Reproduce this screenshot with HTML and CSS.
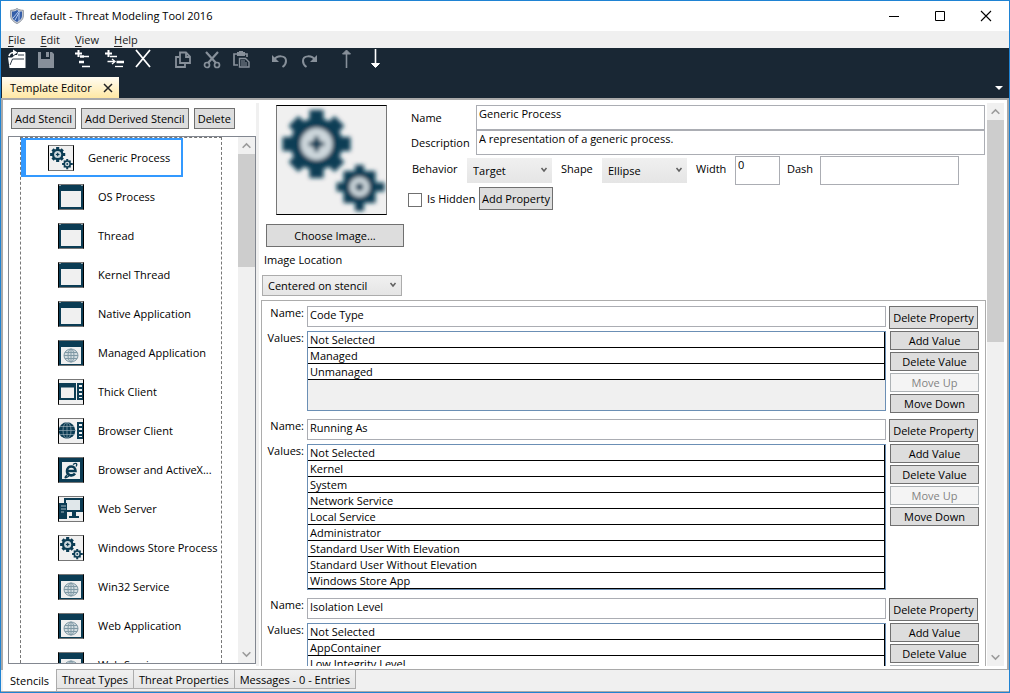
FILE: index.html
```html
<!DOCTYPE html>
<html lang="en">
<head>
<meta charset="utf-8">
<title>default - Threat Modeling Tool 2016</title>
<link rel="stylesheet" href="styles.css">
</head>
<body>
<svg class="sprite" aria-hidden="true">
  <defs>
    <filter id="soft" x="-5%" y="-5%" width="110%" height="110%"><feGaussianBlur stdDeviation="2.2"/></filter>
    <symbol id="gears" viewBox="0 0 108 108">
      <g fill="#0b3c54">
        <circle cx="39" cy="38" r="26"/>
        <g stroke="#0b3c54" stroke-width="14">
          <path d="M39 4v68M5 38h68M16 15l46 46M62 15l-46 46"/>
        </g>
        <circle cx="39" cy="38" r="16" fill="#cdd7dc"/>
        <path d="M37 30h4v6h6v4h-6v6h-4v-6h-6v-4h6z"/>
        <circle cx="39" cy="38" r="5"/>
        <path d="M66 65h32v32h-32z"/>
        <path d="M82 59v46M59 81h48" stroke="#0b3c54" stroke-width="9"/>
        <circle cx="82" cy="81" r="10" fill="#cdd7dc"/>
        <circle cx="82" cy="81" r="4"/>
      </g>
    </symbol>
    <symbol id="window" viewBox="0 0 24 24">
      <path d="M0 0h24v24H0z" fill="#0b3c54"/>
      <path d="M0 0h2v1H0zM22 0h2v1h-2z" fill="#8aa0ab"/>
      <path d="M2 6h20v16H2z" fill="#f0f0f0"/>
    </symbol>
    <symbol id="webwindow" viewBox="0 0 24 24">
      <path d="M0 0h24v24H0z" fill="#0b3c54"/>
      <path d="M2 6h20v17H2z" fill="#f0f0f0"/>
      <ellipse cx="12" cy="14.500" rx="7" ry="6.500" fill="#d3dce0"/>
      <g fill="none" stroke="#8099a5">
        <ellipse cx="12" cy="14.500" rx="7" ry="6.500"/><ellipse cx="12" cy="14.500" rx="3" ry="6.500"/>
        <path d="M12 8v13M5 14.500h14M6 11.500h12M6 17.500h12"/>
      </g>
    </symbol>
    <symbol id="thick" viewBox="0 0 24 24">
      <path d="M0 3h17v17H0z" fill="#0b3c54"/><path d="M2 7.500h13V18H2z" fill="#f0f0f0"/>
      <path d="M18 3h6v17h-6z" fill="#0b3c54"/><path d="M20 5h3v2h-3zM20 9h3v2h-3zM20 13h3v2h-3zM20 17h3v1h-3z" fill="#f0f0f0"/>
    </symbol>
    <symbol id="browser" viewBox="0 0 24 24">
      <circle cx="8" cy="11.500" r="8.300" fill="#0b3c54"/>
      <g fill="none" stroke="#a9bac3" stroke-width=".6"><ellipse cx="8" cy="11.500" rx="4" ry="8"/><path d="M8 3v17M0 11.500h16M1 7.500h14M1 15.500h14"/></g>
      <path d="M18 3h6v17h-6z" fill="#0b3c54"/><path d="M20 5h3v2h-3zM20 9h3v2h-3zM20 13h3v2h-3zM20 17h3v1h-3z" fill="#f0f0f0"/>
    </symbol>
    <symbol id="activex" viewBox="0 0 24 24">
      <path d="M0 0h24v24H0z" fill="#0b3c54"/><path d="M3 4h18v17H3z" fill="#f0f0f0"/>
      <path d="M8 13h8.500c0-6-8.500-6-8.500 0 0 5 6 5.500 8 2.500" fill="none" stroke="#0b3c54" stroke-width="2.600"/>
      <path d="M8 17c-4 4-1 3 2 1M14 6.500c3-2 5-1 3 2" fill="none" stroke="#0b3c54" stroke-width="1.300"/>
    </symbol>
    <symbol id="server" viewBox="0 0 24 24">
      <path d="M5 1h19v14H5z" fill="#0b3c54"/><path d="M7 3h14v10H7z" fill="#e0e7ea"/>
      <path d="M0 6h8v16H0z" fill="#0b3c54"/><path d="M2 9h5M2 12h5M2 15h3" stroke="#a9bac3"/>
      <path d="M13 15h4v4h3v2H10v-2h3z" fill="#0b3c54"/>
    </symbol>
    <symbol id="chevron-down" viewBox="0 0 8 6"><path d="M1.500 1L4 4l2.500-3" fill="none" stroke="currentColor" stroke-width="1.500"/></symbol>
    <symbol id="scroll-up" viewBox="0 0 10 8"><path d="M1.500 6L5 2.500 8.500 6" fill="none" stroke="currentColor" stroke-width="1.400"/></symbol>
    <symbol id="scroll-down" viewBox="0 0 10 8"><path d="M1.500 2L5 5.500 8.500 2" fill="none" stroke="currentColor" stroke-width="1.400"/></symbol>
  </defs>
</svg>

<div class="window">
  <header class="titlebar">
    <svg class="shield" viewBox="0 0 14 16" aria-hidden="true">
      <path d="M7 .5C5 2 3 2.300.7 2.300V8c0 3.500 3 6 6.300 7.500C10.300 14 13.300 11.500 13.300 8V2.300C11 2.300 9 2 7 .5z" fill="#ced2d9" stroke="#8b929d"/>
      <path d="M7 2C5.500 3 4 3.500 2 3.600V8c0 2.600 2.200 4.600 5 6 2.800-1.400 5-3.400 5-6V3.600C10 3.500 8.500 3 7 2z" fill="#355ea9"/>
      <path d="M3 10l6-7M5 12l5-9M9 5v8" stroke="#b9cdf0" fill="none"/>
    </svg>
    <h1 class="title">default - Threat Modeling Tool 2016</h1>
    <div class="caption">
      <button class="caption-button" aria-label="Minimize"><svg width="12" height="12"><path d="M1 6.500h10" stroke="#000"/></svg></button>
      <button class="caption-button" aria-label="Maximize"><svg width="12" height="12"><path d="M1.500 1.500h9v9h-9z" fill="none" stroke="#000"/></svg></button>
      <button class="caption-button" aria-label="Close"><svg width="12" height="12"><path d="M1 1l10 10M11 1L1 11" stroke="#000" stroke-width="1.100"/></svg></button>
    </div>
  </header>

  <nav class="menubar">
    <button class="menu"><u>F</u>ile</button>
    <button class="menu"><u>E</u>dit</button>
    <button class="menu"><u>V</u>iew</button>
    <button class="menu"><u>H</u>elp</button>
  </nav>

  <div class="ribbon">
    <div class="toolbar">
      <div class="tool-group">
        <button class="tool" aria-label="Open"><svg viewBox="0 0 24 24"><path d="M3 9.500h4L10 7h2l1-3h7l.5 1v15H4.500z" fill="#fff"/><path d="M13 7h6M7.500 11H19M7.500 11L5 17" stroke="#192734" fill="none" stroke-width=".9"/><path d="M4 8c1-3 2-3.500 5-3.500" stroke="#fff" stroke-width="1.700" fill="none"/><path d="M8 1.500l4.500 3L8 7.500z" fill="#fff"/></svg></button>
        <button class="tool dim" aria-label="Save"><svg viewBox="0 0 24 24"><path d="M4 4h3v7h9V4h2l2 2v14H4z" fill="currentColor"/><path d="M12 4h3v5h-3z" fill="currentColor"/></svg></button>
      </div>
      <div class="tool-group">
        <button class="tool" aria-label="Add stencil"><svg viewBox="0 0 24 24"><path d="M3 5.500h7M6.500 2v7" stroke="#fff" stroke-width="2"/><path d="M8 8.500h4M7 14h5" stroke="#fff" stroke-width="2.500"/><path d="M12 8.500h5M10 18.500h8" stroke="#fff" stroke-width="1.300"/></svg></button>
        <button class="tool" aria-label="Add derived stencil"><svg viewBox="0 0 24 24"><path d="M4 5.500h7M7.500 2v7" stroke="#fff" stroke-width="2"/><path d="M9 8.500h7M6.500 13.500H13" stroke="#fff" stroke-width="1.700"/><path d="M11 11l3 2.500-3 2.500" stroke="#fff" stroke-width="1.300" fill="none"/><path d="M15.500 14H23" stroke="#fff" stroke-width="2.500"/><path d="M14 18.500h8" stroke="#fff" stroke-width="1.300"/></svg></button>
        <button class="tool" aria-label="Delete"><svg viewBox="0 0 24 24"><path d="M6 2l14 17M20 2L6 19" stroke="#fff" stroke-width="1.800"/></svg></button>
      </div>
      <div class="tool-group wide">
        <button class="tool dim" aria-label="Copy"><svg viewBox="0 0 24 24"><path d="M8 4.500h6l4 4V15H8zM7 9H4v10h9v-3M14 5v4h4" fill="none" stroke="currentColor" stroke-width="1.800"/></svg></button>
        <button class="tool dim" aria-label="Cut"><svg viewBox="0 0 24 24"><path d="M5 4l10 11M17 4L7 15" stroke="currentColor" stroke-width="2.200"/><circle cx="6" cy="17" r="2.500" fill="none" stroke="currentColor" stroke-width="1.700"/><circle cx="16" cy="17" r="2.500" fill="none" stroke="currentColor" stroke-width="1.700"/></svg></button>
        <button class="tool dim" aria-label="Paste"><svg viewBox="0 0 24 24"><path d="M8 17H4V6h13v3" fill="none" stroke="currentColor" stroke-width="1.700"/><path d="M7 4h2V3h4v1h2v4H7z" fill="currentColor"/><path d="M9.500 10.500h6l3.500 3.500v5H9.500z" fill="none" stroke="currentColor" stroke-width="1.400"/><path d="M11 13h4M11 15h6M11 17h6" stroke="currentColor"/></svg></button>
      </div>
      <div class="tool-group">
        <button class="tool dim" aria-label="Undo"><svg viewBox="0 0 24 24"><path d="M6 12c3-5 12-5 12 1 0 3-2 5-3.500 6" fill="none" stroke="currentColor" stroke-width="2"/><path d="M4 7v7h7z" fill="currentColor"/></svg></button>
        <button class="tool dim" aria-label="Redo"><svg viewBox="0 0 24 24"><path d="M18 12c-3-5-12-5-12 1 0 3 2 5 3.500 6" fill="none" stroke="currentColor" stroke-width="2"/><path d="M20 7v7h-7z" fill="currentColor"/></svg></button>
      </div>
      <div class="tool-group">
        <button class="tool dim" aria-label="Move up"><svg viewBox="0 0 24 24"><path d="M11.500 4v16" stroke="currentColor" stroke-width="1.600"/><path d="M7.500 6l4-4 4 4z" fill="currentColor" stroke="currentColor"/></svg></button>
        <button class="tool" aria-label="Move down"><svg viewBox="0 0 24 24"><path d="M11.500 1v16" stroke="#fff" stroke-width="1.600"/><path d="M7.500 15.500l4 4 4-4z" fill="#fff" stroke="#fff"/></svg></button>
      </div>
    </div>
    <div class="doc-tabs">
      <div class="doc-tab">Template Editor
        <button class="tab-close" aria-label="Close tab"><svg width="10" height="10"><path d="M1 1l8 8M9 1L1 9" stroke="#222" stroke-width="1.500"/></svg></button>
      </div>
      <button class="tab-list" aria-label="Open documents"><svg width="8" height="4"><path d="M0 0h8L4 4z" fill="#fff"/></svg></button>
    </div>
  </div>

  <main class="body">
    <section class="stencils">
      <div class="stencil-actions">
        <button class="button">Add Stencil</button>
        <button class="button">Add Derived Stencil</button>
        <button class="button">Delete</button>
      </div>
      <div class="tree">
        <ul class="tree-items">
          <li class="stencil selected"><svg class="thumb"><use href="#gears"/></svg>Generic Process</li>
          <li class="stencil"><svg class="thumb"><use href="#window"/></svg>OS Process</li>
          <li class="stencil"><svg class="thumb"><use href="#window"/></svg>Thread</li>
          <li class="stencil"><svg class="thumb"><use href="#window"/></svg>Kernel Thread</li>
          <li class="stencil"><svg class="thumb"><use href="#window"/></svg>Native Application</li>
          <li class="stencil"><svg class="thumb"><use href="#webwindow"/></svg>Managed Application</li>
          <li class="stencil"><svg class="thumb"><use href="#thick"/></svg>Thick Client</li>
          <li class="stencil"><svg class="thumb"><use href="#browser"/></svg>Browser Client</li>
          <li class="stencil"><svg class="thumb"><use href="#activex"/></svg>Browser and ActiveX...</li>
          <li class="stencil"><svg class="thumb"><use href="#server"/></svg>Web Server</li>
          <li class="stencil"><svg class="thumb"><use href="#gears"/></svg>Windows Store Process</li>
          <li class="stencil"><svg class="thumb"><use href="#webwindow"/></svg>Win32 Service</li>
          <li class="stencil"><svg class="thumb"><use href="#webwindow"/></svg>Web Application</li>
          <li class="stencil"><svg class="thumb"><use href="#webwindow"/></svg>Web Service</li>
        </ul>
        <div class="scrollbar" aria-hidden="true">
          <svg class="scroll-arrow"><use href="#scroll-up"/></svg>
          <div class="track"><div class="grip grip-tree"></div></div>
          <svg class="scroll-arrow"><use href="#scroll-down"/></svg>
        </div>
      </div>
    </section>

    <div class="splitter"></div>

    <section class="editor">
      <div class="editor-content">
        <div class="summary">
          <div class="picture">
            <svg class="preview" role="img" aria-label="Stencil image"><g filter="url(#soft)"><use href="#gears"/></g></svg>
            <button class="button choose">Choose Image...</button>
            <label class="location-label" for="location">Image Location</label>
            <span class="picker picker-outlined"><select id="location"><option>Centered on stencil</option></select><svg class="picker-mark"><use href="#chevron-down"/></svg></span>
          </div>
          <div class="fields">
            <div class="field"><label for="name">Name</label><input id="name" class="text tall" value="Generic Process"></div>
            <div class="field"><label for="description">Description</label><input id="description" class="text tall" value="A representation of a generic process."></div>
            <div class="options">
              <label class="behavior-label" for="behavior">Behavior</label>
              <span class="picker"><select id="behavior"><option>Target</option></select><svg class="picker-mark"><use href="#chevron-down"/></svg></span>
              <label class="shape-label" for="shape">Shape</label>
              <span class="picker"><select id="shape"><option>Ellipse</option></select><svg class="picker-mark"><use href="#chevron-down"/></svg></span>
              <label class="width-label" for="width">Width</label>
              <input id="width" class="text number" value="0">
              <label class="dash-label" for="dash">Dash</label>
              <input id="dash" class="text dash" value="">
            </div>
            <div class="flags">
              <input id="hidden" class="check" type="checkbox"><label for="hidden">Is Hidden</label>
              <button class="button add-property">Add Property</button>
            </div>
          </div>
        </div>

        <div class="properties">
          <div class="property">
            <label for="p1">Name:</label><input id="p1" class="text" value="Code Type"><button class="button remove">Delete Property</button>
            <span class="values-label">Values:</span>
            <ul class="values"><li>Not Selected</li><li>Managed</li><li>Unmanaged</li></ul>
            <div class="value-actions"><button class="button">Add Value</button><button class="button">Delete Value</button><button class="button" disabled>Move Up</button><button class="button">Move Down</button></div>
          </div>
          <div class="property">
            <label for="p2">Name:</label><input id="p2" class="text" value="Running As"><button class="button remove">Delete Property</button>
            <span class="values-label">Values:</span>
            <ul class="values"><li>Not Selected</li><li>Kernel</li><li>System</li><li>Network Service</li><li>Local Service</li><li>Administrator</li><li>Standard User With Elevation</li><li>Standard User Without Elevation</li><li>Windows Store App</li></ul>
            <div class="value-actions"><button class="button">Add Value</button><button class="button">Delete Value</button><button class="button" disabled>Move Up</button><button class="button">Move Down</button></div>
          </div>
          <div class="property">
            <label for="p3">Name:</label><input id="p3" class="text" value="Isolation Level"><button class="button remove">Delete Property</button>
            <span class="values-label">Values:</span>
            <ul class="values"><li>Not Selected</li><li>AppContainer</li><li>Low Integrity Level</li></ul>
            <div class="value-actions"><button class="button">Add Value</button><button class="button">Delete Value</button><button class="button" disabled>Move Up</button><button class="button">Move Down</button></div>
          </div>
        </div>
      </div>
      <div class="scrollbar" aria-hidden="true">
        <svg class="scroll-arrow"><use href="#scroll-up"/></svg>
        <div class="track"><div class="grip grip-editor"></div></div>
        <svg class="scroll-arrow"><use href="#scroll-down"/></svg>
      </div>
    </section>
  </main>

  <nav class="page-tabs">
    <button class="page-tab current">Stencils</button>
    <button class="page-tab">Threat Types</button>
    <button class="page-tab">Threat Properties</button>
    <button class="page-tab">Messages - 0 - Entries</button>
  </nav>
</div>
</body>
</html>
```
FILE: styles.css
```css
* { box-sizing: border-box; }
body { margin: 0; color: #000; }
body, button, input, select { font: 11px/15px "Open Sans", "Noto Sans", sans-serif; }
button { padding: 0; border: 0; background: none; color: inherit; white-space: nowrap; }
ul { margin: 0; padding: 0; list-style: none; }
.sprite { position: absolute; width: 0; height: 0; }

.window { display: flex; flex-direction: column; height: 100vh; border: 1px solid #1f83d3; background: #fff; overflow: hidden; }

.titlebar { display: flex; flex: none; align-items: center; height: 30px; padding-left: 9px; }
.shield { width: 14px; height: 16px; margin-right: 6px; }
.title { flex: 1; margin: 0; padding-bottom: 2px; font-size: 11px; font-weight: 400; }
.caption { display: flex; }
.caption-button { display: grid; place-items: center; width: 46px; height: 29px; }

.menubar { display: flex; flex: none; gap: 15px; height: 17px; padding-left: 7px; background: #f0f0f0; }
.menu { line-height: 17px; color: #222; }
.menu u { text-underline-offset: 2px; }

.ribbon { display: flex; flex: none; flex-direction: column; justify-content: space-between; height: 50px; background: #192734; }
.toolbar { display: flex; gap: 14px; padding-left: 4px; }
.tool-group { display: flex; gap: 5px; }
.tool-group.wide { margin-left: 4px; }
.tool { width: 24px; height: 24px; color: #fff; }
.tool svg { display: block; width: 24px; height: 24px; }
.tool.dim { color: #87909a; }
.doc-tabs { display: flex; align-items: center; justify-content: space-between; padding: 0 6px 0 1px; }
.doc-tab { display: flex; align-items: center; gap: 11px; height: 21px; padding: 0 6px 0 8px; background: linear-gradient(#fffcf2, #ffe8a4); }
.tab-close { display: grid; place-items: center; width: 10px; height: 10px; }
.tab-list { display: grid; }

.body { display: flex; flex: 1; min-height: 0; padding: 3px 3px 3px 0; border: 2px solid #a9a9a9; border-bottom: 1px solid #a9a9a9; }

.button { height: 21px; border: 1px solid #707070; background: #ddd; text-align: center; }
.button:disabled { border-color: #adb2b5; background: #f4f4f4; color: #838383; }

.stencils { display: flex; flex: 0 0 253px; flex-direction: column; padding: 5px 0 2px 5px; }
.stencil-actions { display: flex; gap: 5px; margin-bottom: 7px; padding-left: 3px; }
.stencil-actions .button { padding: 0 3px; }
.tree { display: flex; flex: 1; justify-content: space-between; min-height: 0; border: 1px solid #828790; overflow: hidden; }
.tree-items { width: 202px; margin-left: 11px; border: 1px dashed #777; border-bottom: 0; overflow: hidden; }
.stencil { display: flex; align-items: center; gap: 14px; height: 39px; padding-left: 37px; white-space: nowrap; }
.stencil.selected { width: 162px; padding-left: 22px; border: 2px solid #3399ff; border-left-width: 5px; }
.thumb { flex: none; width: 26px; height: 26px; border: 1px solid #000; border-top-color: #777; border-bottom-color: #777; background: #f0f0f0; }

.scrollbar { display: flex; flex: none; flex-direction: column; width: 17px; background: #f0f0f0; color: #9a9a9a; }
.scroll-arrow { width: 17px; height: 17px; padding: 4px 3px; }
.track { flex: 1; min-height: 0; }
.grip { background: #cdcdcd; }
.grip-tree { height: 23%; }
.grip-editor { height: 42%; }

.splitter { flex: 0 0 3px; background: #f0f0f0; }

.editor { display: flex; flex: 1; min-width: 0; }
.editor-content { flex: 1; min-width: 0; padding: 2px 1px 0 2px; overflow: hidden; }
.summary { display: flex; height: 195px; padding-right: 1px; }
.picture { display: flex; flex: 0 0 142px; flex-direction: column; align-items: flex-start; margin-left: 1px; }
.preview { width: 111px; height: 110px; margin-left: 14px; border: 1px solid #000; border-left-color: #777; border-right-color: #777; background: #f0f0f0; }
.choose { width: 138px; height: 23px; margin: 9px 0 5px 4px; }
.location-label { margin: 0 0 8px 2px; }

.picker { position: relative; display: flex; width: 85px; height: 25px; }
.picker select { width: 100%; padding: 0 18px 0 6px; border: 0; border-radius: 0; appearance: none; background: linear-gradient(#f0f0f0, #e5e5e5); color: #000; }
.picker-mark { position: absolute; top: 9px; right: 4px; width: 8px; height: 6px; color: #606060; pointer-events: none; }
.picker-outlined { flex: none; width: 140px; height: 21px; }
.picker-outlined select { padding-left: 5px; border: 1px solid #acacac; }
.picker-outlined .picker-mark { top: 7px; right: 5px; }

.text { min-width: 0; height: 21px; margin: 0; padding: 0 2px 4px; border: 1px solid #abadb3; border-radius: 0; background: #fff; color: #000; }
.tall { height: 25px; padding-bottom: 8px; }
.fields { flex: 1; min-width: 0; padding-left: 7px; }
.field { display: grid; grid-template-columns: 65px 1fr; align-items: center; }
.options { display: flex; align-items: center; margin-top: 1px; padding-left: 1px; }
.options label { flex: none; padding-bottom: 4px; }
.behavior-label { width: 55px; }
.shape-label { width: 50px; padding-left: 9px; }
.width-label { width: 48px; padding-left: 9px; }
.dash-label { width: 40px; padding-left: 7px; }
.number { width: 45px; height: 29px; padding-bottom: 12px; }
.dash { width: 139px; height: 29px; }
.flags { display: flex; align-items: center; height: 23px; margin: 2px 0 0 -3px; }
.check { width: 14px; height: 14px; margin: 2px 5px 0 0; border: 1px solid #707070; appearance: none; background: #fff; }
.flags label { width: 52px; }
.add-property { width: 74px; height: 23px; }

.properties { padding: 5px 6px 0 0; border: 1px solid #acacac; border-bottom: 0; }
.property { display: grid; grid-template-columns: 45px 1fr 93px; align-items: start; }
.property label, .values-label { margin-top: -1px; padding-right: 3px; text-align: right; }
.remove { width: 89px; height: 23px; margin: 0 0 2px 3px; }
.values { min-height: 80px; margin-bottom: 8px; border: 1px solid #6b8fb5; background: #f0f0f0; }
.values li { height: 16px; padding-left: 2px; border-right: 1px solid #000; border-bottom: 1px solid #000; background: #fff; }
.value-actions { display: grid; gap: 2px; margin: 0 0 6px 4px; }
.value-actions .button { height: 19px; }

.page-tabs { display: flex; flex: none; align-items: flex-start; height: 22px; padding-left: 2px; border-bottom: 1px solid #a9a9a9; background: #f0f0f0; }
.page-tab { height: 20px; margin-top: -1px; padding: 0 5px; border: 1px solid #acacac; border-left-width: 0; background: linear-gradient(#f0f0f0, #e5e5e5); }
.page-tab.current { height: 22px; padding: 1px 7px 0; border-width: 0 1px 0 0; background: #fff; }
```
